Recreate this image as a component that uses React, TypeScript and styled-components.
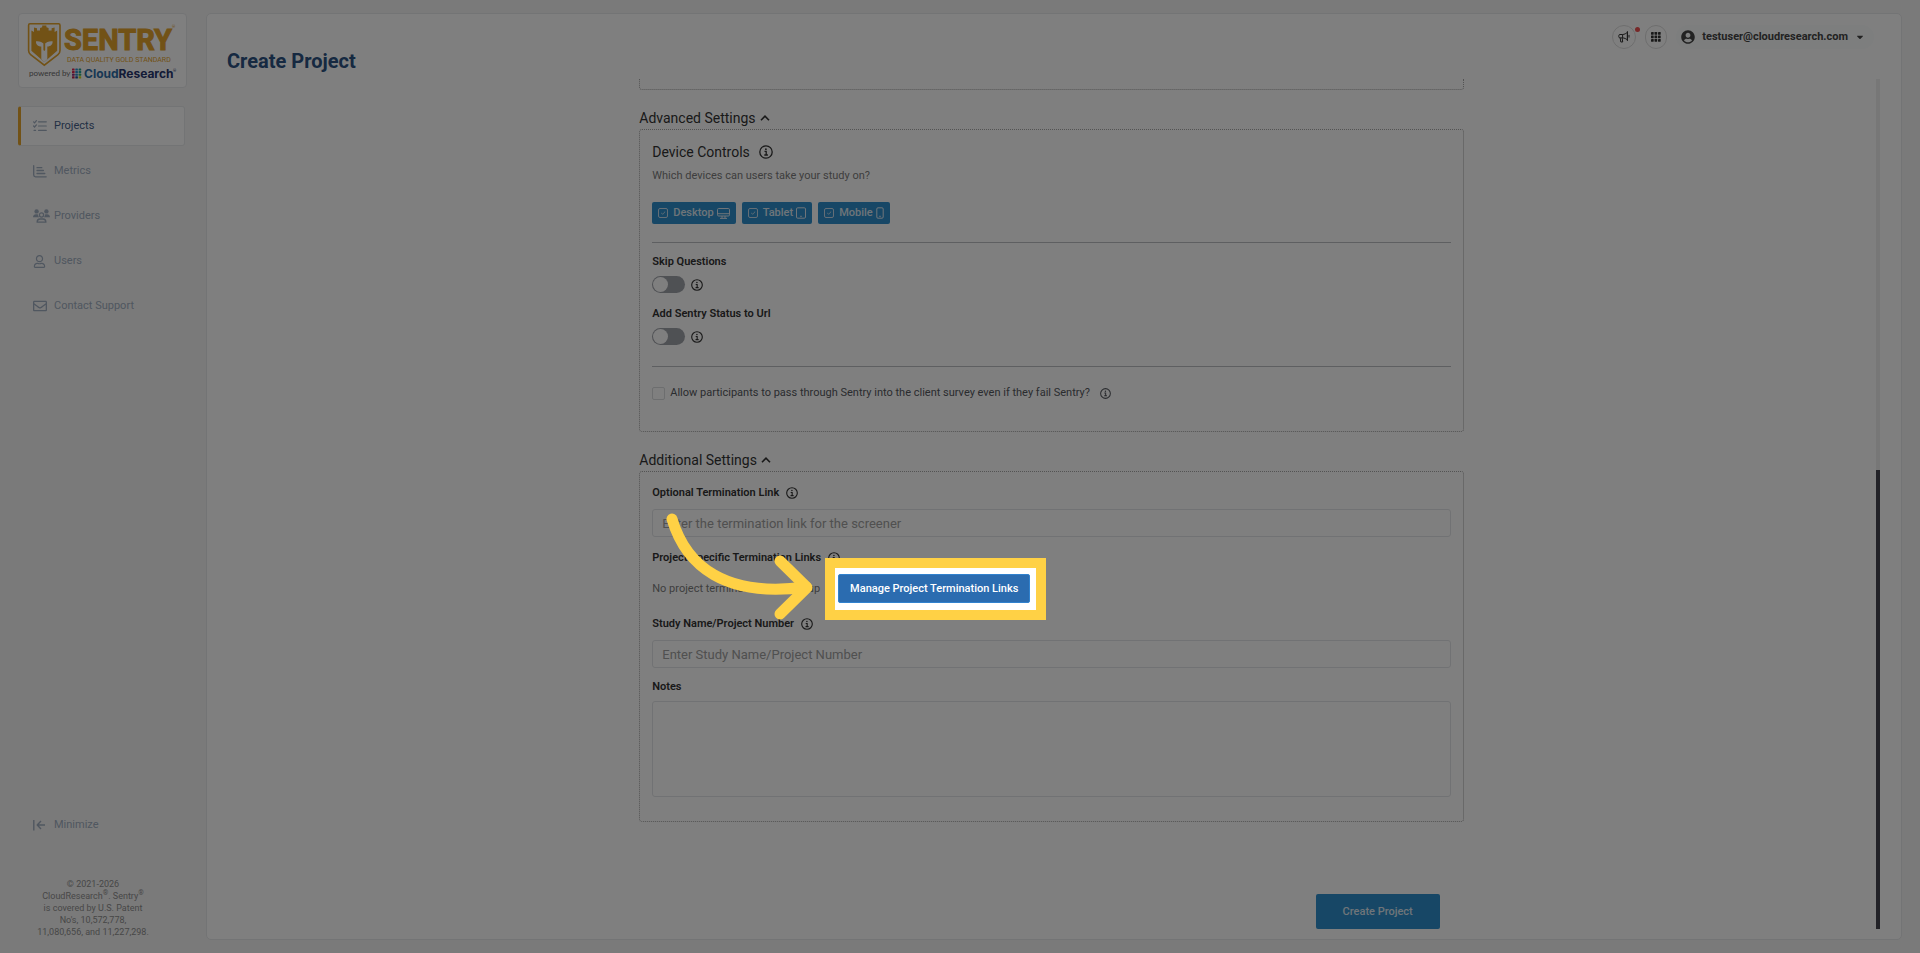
import React from 'react';
import styled, { createGlobalStyle } from 'styled-components';
import { BsCheckLg } from 'react-icons/bs';
import { FaCaretDown, FaRegEnvelope, FaRegUser, FaUserCircle } from 'react-icons/fa';

const color = {
  page: '#f5f5f5',
  panel: '#ffffff',
  line: '#e6e8ea',
  dash: '#a6a6a6',
  rule: '#bdbfc2',
  ink: '#333333',
  muted: '#7c7c7c',
  nav: '#a0aec0',
  navy: '#2c5282',
  blue: '#2e8fcd',
  gold: '#e4a42c',
  spot: '#ffd145',
};

const GlobalStyle = createGlobalStyle`
  *, *::before, *::after { box-sizing: border-box; }
  body {
    margin: 0;
    background: ${color.page};
    color: ${color.ink};
    font-family: Roboto, "Liberation Sans", sans-serif;
    font-size: 11px;
    line-height: 16px;
  }
  button, input, textarea { font: inherit; color: inherit; }
`;

const Shell = styled.div`
  display: flex;
  gap: 19px;
  min-height: 100vh;
  padding: 13px 18px;
`;

const Dim = styled.div`
  position: fixed;
  inset: 0;
  z-index: 10;
  background: rgba(0, 0, 0, 0.5);
  pointer-events: none;
`;

/* ---------- Sidebar ---------- */

const Sidebar = styled.aside`
  display: flex;
  flex: none;
  flex-direction: column;
  width: 169px;
`;

const LogoCard = styled.a`
  display: block;
  height: 75px;
  border: 1px solid ${color.line};
  border-radius: 4px;
  background: ${color.panel};
`;

const Nav = styled.nav`
  display: flex;
  flex-direction: column;
  gap: 5px;
  margin: 18px 2px 0 0;
`;

const NavItem = styled.a<{ $active?: boolean }>`
  display: flex;
  align-items: center;
  gap: 4px;
  height: 40px;
  padding-left: 12px;
  border: 1px solid ${(p) => (p.$active ? color.line : 'transparent')};
  border-left: 3px solid ${(p) => (p.$active ? color.gold : 'transparent')};
  border-radius: 3px;
  background: ${(p) => (p.$active ? color.panel : 'transparent')};
  color: ${(p) => (p.$active ? '#46618a' : color.nav)};
  text-decoration: none;
`;

const NavIcon = styled.span`
  display: flex;
  width: 17px;
  color: ${color.nav};
`;

const Minimize = styled.button`
  display: flex;
  align-items: center;
  gap: 4px;
  margin-top: auto;
  padding: 0 15px;
  border: 0;
  background: none;
  color: ${color.nav};
`;

const Legal = styled.p`
  width: 120px;
  margin: 45px 0 2px 15px;
  color: #8f8f8f;
  font-size: 9px;
  line-height: 12px;
  text-align: center;

  sup { font-size: 7px; line-height: 0; }
`;

/* ---------- Main panel ---------- */

const Panel = styled.main`
  display: flex;
  flex: 1;
  flex-direction: column;
  min-width: 0;
  padding: 11px 21px 10px 20px;
  border: 1px solid ${color.line};
  border-radius: 5px;
  background: ${color.panel};
`;

const Header = styled.header`
  display: flex;
  justify-content: space-between;
  height: 54px;
  padding-right: 6px;
`;

const Title = styled.h1`
  margin: 24px 0 0;
  color: ${color.navy};
  font-size: 20px;
  font-weight: 700;
  line-height: 24px;
`;

const Tools = styled.div`
  display: flex;
  align-items: flex-start;
  gap: 9px;
`;

const RoundButton = styled.button<{ $width: number }>`
  position: relative;
  display: flex;
  align-items: center;
  justify-content: center;
  width: ${(p) => p.$width}px;
  height: 24px;
  padding: 0;
  border: 1px solid #dcdcdc;
  border-radius: 12px;
  background: none;
`;

const Dot = styled.span`
  position: absolute;
  top: 1px;
  right: -5px;
  width: 5px;
  height: 5px;
  border-radius: 50%;
  background: #ef5050;
`;

const Account = styled.button`
  display: flex;
  align-items: center;
  gap: 7px;
  height: 24px;
  padding: 0 9px 0 5px;
  border: 0;
  border-radius: 12px;
  background: #fafcfc;
  color: #444444;
  font-weight: 700;
`;

const Body = styled.div`
  display: flex;
  flex: 1;
`;

const Content = styled.form`
  flex: 1;
  min-width: 0;
`;

const Column = styled.div`
  width: 50%;
  min-width: 560px;
  margin: 0 auto;
`;

const Track = styled.div`
  display: flex;
  flex-direction: column;
  justify-content: flex-end;
  width: 4px;
  background: #eeeeee;
`;

const Thumb = styled.div`
  height: 54%;
  background: #44454f;
`;

/* ---------- Form ---------- */

const PreviousCard = styled.div`
  height: 11px;
  border: 1px dotted ${color.dash};
  border-top: 0;
  border-radius: 0 0 3px 3px;
`;

const SectionToggle = styled.button`
  display: flex;
  align-items: center;
  gap: 4px;
  margin-top: 17px;
  padding: 0;
  border: 0;
  background: none;
  font-size: 14px;
  line-height: 22px;
`;

const Card = styled.section<{ $bottom: number }>`
  padding: 11px 12px ${(p) => p.$bottom}px;
  border: 1px dotted ${color.dash};
  border-radius: 3px;
`;

const CardTitle = styled.h2`
  display: flex;
  align-items: center;
  gap: 9px;
  margin: 0 0 5px;
  font-size: 14px;
  font-weight: 400;
  line-height: 22px;
`;

const Hint = styled.p`
  margin: 0;
  color: ${color.muted};
`;

const Devices = styled.div`
  display: flex;
  gap: 6px;
  margin: 18px 0;
`;

const Device = styled.label`
  display: flex;
  align-items: center;
  gap: 3px;
  height: 22px;
  padding: 0 6px;
  border-radius: 2px;
  background: ${color.blue};
  color: #dfe9f2;
  font-weight: 500;
`;

const DeviceBox = styled.span`
  position: relative;
  display: flex;
  margin-right: 2px;

  svg { position: absolute; top: 2px; left: 2px; }
`;

const DeviceCheck = styled.input`
  width: 10px;
  height: 10px;
  margin: 0;
  border: 1px solid #c9dced;
  border-radius: 2px;
  appearance: none;
`;

const Rule = styled.hr`
  height: 1px;
  margin: 0;
  border: 0;
  background: ${color.rule};
`;

const Switches = styled.div`
  display: flex;
  flex-direction: column;
  gap: 13px;
  padding: 11px 0 21px;
`;

const Field = styled.div<{ $tight?: boolean }>`
  display: flex;
  flex-direction: column;
  gap: ${(p) => (p.$tight ? 6 : 8)}px;
`;

const Fields = styled.div`
  display: flex;
  flex-direction: column;
  gap: 13px;
  padding: 2px 0 11px;
`;

const LabelRow = styled.div`
  display: flex;
  align-items: center;
  gap: 7px;
  height: 16px;
`;

const Label = styled.label`
  font-weight: 600;
`;

const SwitchRow = styled.div`
  display: flex;
  align-items: center;
  gap: 6px;
  height: 17px;
`;

const Switch = styled.input`
  display: flex;
  width: 33px;
  height: 17px;
  margin: 0;
  padding: 1px;
  border-radius: 9px;
  background: #9fa2a9;
  appearance: none;

  &::before {
    content: '';
    width: 15px;
    height: 15px;
    border-radius: 50%;
    background: #ffffff;
  }
`;

const AllowRow = styled.div`
  display: flex;
  align-items: center;
  gap: 10px;
  margin-top: 18px;
  color: #55585e;
`;

const AllowLabel = styled.label`
  display: flex;
  align-items: center;
  gap: 5px;
`;

const AllowCheck = styled.input`
  width: 13px;
  height: 13px;
  margin: 0;
  border: 1px solid #dadcdf;
  border-radius: 2px;
  appearance: none;
`;

const TextBox = styled.input`
  width: 100%;
  height: 28px;
  padding: 0 9px;
  border: 1px solid #e2e5e8;
  border-radius: 3px;
  background: none;
  font-size: 13px;

  &::placeholder { color: #a0a0a0; opacity: 1; }
`;

const NotesBox = styled.textarea`
  display: block;
  width: 100%;
  height: 96px;
  border: 1px solid #e2e5e8;
  border-radius: 3px;
  background: none;
  resize: none;
`;

const LinksRow = styled.div`
  display: flex;
  align-items: center;
  gap: 18px;
`;

const Actions = styled.div`
  display: flex;
  justify-content: flex-end;
  margin-top: 72px;
  padding-right: 24px;
`;

const Submit = styled.button`
  height: 35px;
  padding: 0 27px;
  border: 0;
  border-radius: 2px;
  background: ${color.blue};
  color: #dfe9f2;
  font-weight: 500;
`;

/* ---------- Guided-tour highlight ---------- */

const Spot = styled.div`
  position: relative;
  z-index: 11;
`;

const SpotFrame = styled.span`
  position: absolute;
  inset: -16px -16px -17px -13px;
  border: 10px solid ${color.spot};
  background: #ffffff;
`;

const SpotArrow = styled.svg`
  position: absolute;
  top: -66px;
  left: -178px;
  fill: none;
  stroke: ${color.spot};
  stroke-width: 11;
  stroke-linecap: round;
  stroke-linejoin: round;
  pointer-events: none;
`;

const ManageButton = styled.button`
  position: relative;
  display: block;
  height: 29px;
  padding: 0 11px;
  border: 1px solid #3182ce;
  border-radius: 2px;
  background: #2b6cb0;
  color: #ffffff;
  font-weight: 500;
`;

/* ---------- Drawings ---------- */

const InfoIcon = ({ size = 12 }: { size?: number }) => (
  <svg width={size} height={size} viewBox="0 0 14 14" fill="none" stroke="currentColor" strokeWidth="1.3">
    <circle cx="7" cy="7" r="6.2" />
    <path d="M5.500 6.400H7.200V9.900M5.300 10H8.900" />
    <circle cx="6.900" cy="4.200" r=".9" fill="currentColor" stroke="none" />
  </svg>
);

const ListIcon = () => (
  <svg width="14" height="12" viewBox="0 0 14 12" fill="none" stroke="currentColor" strokeLinecap="round">
    <path d="M5.5 1.8H13.3M5.5 6H13.3M5.5 10.3H13.3" strokeWidth="1.2" />
    <path d="M.6 1.8l1 1L3.4.7M.6 6l1 1L3.4 4.9M1 10.3h1.6" strokeWidth="1.2" />
  </svg>
);

const ChartIcon = () => (
  <svg width="14" height="13" viewBox="0 0 14 13" fill="none" stroke="currentColor" strokeWidth="1.3" strokeLinecap="round">
    <path d="M.7.7V10q0 1.8 1.8 1.8H13.2" />
    <path d="M4 2.7h4.8M4 5.5h6.4M4 8.5h7.8" />
  </svg>
);

const ProvidersIcon = () => (
  <svg width="17" height="14" viewBox="0 0 17 14" fill="currentColor">
    <circle cx="3.6" cy="2.4" r="2.2" />
    <circle cx="13.4" cy="2.4" r="2.2" />
    <path d="M0 8.3C0 6.3 1.3 5.3 3 5.3h1.8c.2 1.3.6 2.1 1.3 3zM17 8.3c0-2-1.3-3-3-3h-1.8c-.2 1.3-.6 2.1-1.3 3z" />
    <g fill="none" stroke="currentColor" strokeWidth="1.3">
      <circle cx="8.5" cy="6" r="2.1" />
      <path d="M4.1 13.2c0-2.2 1.2-3.2 2.8-3.2h3.2c1.6 0 2.8 1 2.8 3.2z" strokeLinejoin="round" />
    </g>
  </svg>
);

const MinimizeIcon = () => (
  <svg width="17" height="12" viewBox="0 0 17 12" fill="none" stroke="currentColor" strokeWidth="1.4">
    <path d="M.8 1v10.5" />
    <path d="M12 6H4.4M8 2L4.2 6 8 10" strokeLinejoin="round" />
  </svg>
);

const ChevronUp = () => (
  <svg width="10" height="6" viewBox="0 0 10 6" fill="none" stroke="currentColor" strokeWidth="1.6">
    <path d="M1 5.2L5 1.2 9 5.2" />
  </svg>
);

const MegaphoneIcon = () => (
  <svg width="12" height="12" viewBox="0 0 12 12" fill="none" stroke="currentColor" strokeWidth="1" strokeLinejoin="round">
    <path d="M4.600 3.500C6.500 3.400 8 2.600 9.400 1.200V9C8 7.700 6.500 7 4.600 6.900z" />
    <path d="M4.600 3.500H2Q.8 3.500.8 4.700v1q0 1.200 1.200 1.200H4.600M2.200 6.900l.6 4.100h1.900L4.200 6.900" />
    <path d="M9.400 .6V9.600M11 4.300v1.900" strokeLinecap="round" />
  </svg>
);

const GridIcon = () => (
  <svg width="10" height="10" viewBox="0 0 10 10" fill={color.ink}>
    {[0, 3.5, 7].map((y) => [0, 3.5, 7].map((x) => <rect key={`${x}-${y}`} x={x} y={y} width="2.7" height="2.7" rx=".4" />))}
  </svg>
);

const DisplayIcon = () => (
  <svg width="13" height="11" viewBox="0 0 13 11" fill="none" stroke="currentColor">
    <rect x=".5" y=".5" width="12" height="7.500" rx="1.200" />
    <path d="M.5 5.700h12M5 8v2M8 8v2M3 10.400h7" />
  </svg>
);

const TabletIcon = () => (
  <svg width="10" height="12" viewBox="0 0 10 12" fill="none" stroke="currentColor">
    <rect x=".5" y=".8" width="9" height="10.400" rx="1.200" />
    <path d="M4.200 9.300h1.600" />
  </svg>
);

const PhoneIcon = () => (
  <svg width="8" height="12" viewBox="0 0 8 12" fill="none" stroke="currentColor">
    <rect x=".8" y=".8" width="6.400" height="10.400" rx="1.200" />
    <path d="M3.200 9.300h1.600" />
  </svg>
);

const DOTS = [
  ['#e0234e', '#2f8fd0', '#1f9e8e'],
  ['#e0234e', '#2f8fd0', '#1fa8a0'],
  ['#8f2a80', '#2f8fd0', '#3fb370'],
  ['#c0204e', '#24509a', '#d0d820'],
];

const Logo = () => (
  <svg width="167" height="73" viewBox="0 0 167 73" role="img" aria-label="Sentry, powered by CloudResearch">
    <path
      d="M11 9.8H39.6Q41 9.8 41 11.2V36.5Q41 39 39 40.6L25.3 51.2 11.6 40.6Q9.6 39 9.6 36.5V11.2Q9.6 9.8 11 9.8Z"
      fill="none" stroke={color.gold} strokeWidth="1.6"
    />
    <path
      d="M12.400 16.500L15 18V13.500l3 .8v2.200h3V14l2.200-.8V11.600h4.200v1.600l2.200.8v2.500h3v-2.200l3-.8V18l2.600-1.500V36.800L25.300 48 12.400 36.800z"
      fill={color.gold}
    />
    <path
      d="M17 27.300c3.400-.4 6 .6 8.300 3 2.300-2.400 4.900-3.400 8.300-3 .2 3.300-1.800 5.100-5.300 5.300V45.200L25.300 48l-3-2.800V32.600c-3.500-.2-5.500-2-5.300-5.300z"
      fill={color.panel}
    />
    <path d="M24.400 29.500h1.800V36l-.9 1-.9-1z" fill={color.gold} />
    <text x="45" y="36" fill={color.gold} stroke={color.gold} strokeWidth="1" fontFamily="Roboto, sans-serif" fontWeight="700" fontSize="29">SENTRY</text>
    <text x="48" y="48" fill={color.gold} fontFamily="Roboto, sans-serif" fontSize="7">DATA QUALITY GOLD STANDARD</text>
    <text x="153" y="14" fill={color.gold} fontFamily="Roboto, sans-serif" fontSize="4">®</text>
    <text x="10" y="62" fill="#6b6b6b" fontFamily="Lato, sans-serif" fontSize="8">powered by</text>
    {DOTS.map((row, r) => row.map((c, i) => (
      <rect key={`${r}-${i}`} x={53 + i * 3.3} y={54.5 + r * 2.6} width="2.6" height="2.1" rx=".5" fill={c} />
    )))}
    <text x="65" y="64" fontFamily="Inter, sans-serif" fontWeight="700" fontSize="12">
      <tspan fill="#2f6fa8">Cloud</tspan>
      <tspan fill="#26366e">Research</tspan>
    </text>
    <text x="154" y="58" fill="#26366e" fontFamily="Roboto, sans-serif" fontSize="4">®</text>
  </svg>
);

/* ---------- Page ---------- */

const NAV = [
  { label: 'Projects', icon: <ListIcon />, active: true },
  { label: 'Metrics', icon: <ChartIcon /> },
  { label: 'Providers', icon: <ProvidersIcon /> },
  { label: 'Users', icon: <FaRegUser size={13} /> },
  { label: 'Contact Support', icon: <FaRegEnvelope size={14} /> },
];

const DEVICES = [
  { label: 'Desktop', icon: <DisplayIcon /> },
  { label: 'Tablet', icon: <TabletIcon /> },
  { label: 'Mobile', icon: <PhoneIcon /> },
];

const SWITCHES = [
  { id: 'skip', label: 'Skip Questions' },
  { id: 'status', label: 'Add Sentry Status to Url' },
];

export default function App() {
  return (
    <>
      <GlobalStyle />
      <Shell>
        <Sidebar>
          <LogoCard href="#home"><Logo /></LogoCard>
          <Nav>
            {NAV.map((item) => (
              <NavItem key={item.label} href="#nav" $active={item.active}>
                <NavIcon>{item.icon}</NavIcon>
                {item.label}
              </NavItem>
            ))}
          </Nav>
          <Minimize type="button">
            <MinimizeIcon />
            Minimize
          </Minimize>
          <Legal>
            © 2021-2026<br />
            CloudResearch<sup>®</sup>. Sentry<sup>®</sup><br />
            is covered by U.S. Patent<br />
            No's, 10,572,778,<br />
            11,080,656, and 11,227,298.
          </Legal>
        </Sidebar>

        <Panel>
          <Header>
            <Title>Create Project</Title>
            <Tools>
              <RoundButton type="button" aria-label="Announcements" $width={24}>
                <MegaphoneIcon />
                <Dot />
              </RoundButton>
              <RoundButton type="button" aria-label="Apps" $width={22}><GridIcon /></RoundButton>
              <Account type="button">
                <FaUserCircle size={14} />
                testuser@cloudresearch.com
                <FaCaretDown size={10} />
              </Account>
            </Tools>
          </Header>

          <Body>
            <Content>
              <Column>
                <PreviousCard />

                <SectionToggle type="button">Advanced Settings <ChevronUp /></SectionToggle>
                <Card $bottom={30}>
                  <CardTitle>Device Controls <InfoIcon size={14} /></CardTitle>
                  <Hint>Which devices can users take your study on?</Hint>
                  <Devices>
                    {DEVICES.map((d) => (
                      <Device key={d.label}>
                        <DeviceBox>
                          <DeviceCheck type="checkbox" defaultChecked />
                          <BsCheckLg size={6} />
                        </DeviceBox>
                        {d.label}
                        {d.icon}
                      </Device>
                    ))}
                  </Devices>
                  <Rule />
                  <Switches>
                    {SWITCHES.map((s) => (
                      <Field key={s.id} $tight>
                        <LabelRow><Label htmlFor={s.id}>{s.label}</Label></LabelRow>
                        <SwitchRow>
                          <Switch type="checkbox" role="switch" id={s.id} />
                          <InfoIcon />
                        </SwitchRow>
                      </Field>
                    ))}
                  </Switches>
                  <Rule />
                  <AllowRow>
                    <AllowLabel>
                      <AllowCheck type="checkbox" />
                      Allow participants to pass through Sentry into the client survey even if they fail Sentry?
                    </AllowLabel>
                    <InfoIcon size={11} />
                  </AllowRow>
                </Card>

                <SectionToggle type="button">Additional Settings <ChevronUp /></SectionToggle>
                <Card $bottom={24}>
                  <Fields>
                    <Field>
                      <LabelRow>
                        <Label htmlFor="termination">Optional Termination Link</Label>
                        <InfoIcon />
                      </LabelRow>
                      <TextBox id="termination" placeholder="Enter the termination link for the screener" />
                    </Field>
                    <Field>
                      <LabelRow>
                        <Label htmlFor="manage">Project Specific Termination Links</Label>
                        <InfoIcon />
                      </LabelRow>
                      <LinksRow>
                        <Hint>No project termination links set up</Hint>
                        <Spot>
                          <SpotFrame />
                          <ManageButton type="button" id="manage">Manage Project Termination Links</ManageButton>
                          <SpotArrow width="160" height="116" viewBox="0 0 160 116" aria-hidden="true">
                            <path d="M12 11C26 58 65 90 146 79" />
                            <path d="M120 53L147 79.5 120 106" />
                          </SpotArrow>
                        </Spot>
                      </LinksRow>
                    </Field>
                    <Field>
                      <LabelRow>
                        <Label htmlFor="study">Study Name/Project Number</Label>
                        <InfoIcon />
                      </LabelRow>
                      <TextBox id="study" placeholder="Enter Study Name/Project Number" />
                    </Field>
                  </Fields>
                  <Field $tight>
                    <LabelRow><Label htmlFor="notes">Notes</Label></LabelRow>
                    <NotesBox id="notes" />
                  </Field>
                </Card>

                <Actions><Submit type="submit">Create Project</Submit></Actions>
              </Column>
            </Content>
            <Track><Thumb /></Track>
          </Body>
        </Panel>
      </Shell>
      <Dim />
    </>
  );
}
